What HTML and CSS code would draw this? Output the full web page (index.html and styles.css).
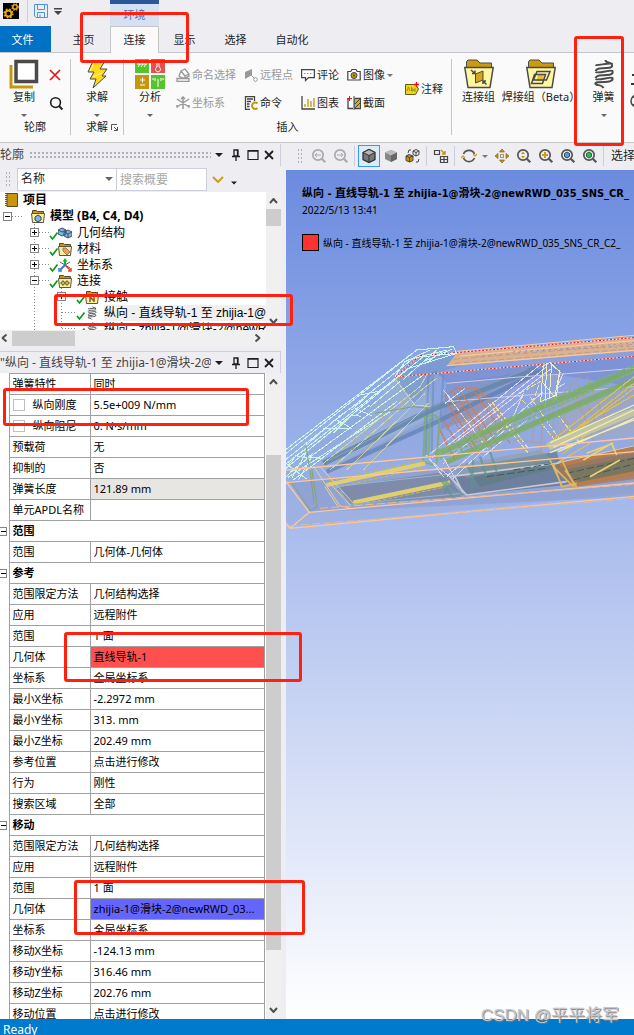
FILE: index.html
```html
<!DOCTYPE html>
<html lang="zh-CN">
<head>
<meta charset="utf-8">
<title>Mechanical</title>
<link rel="stylesheet" href="styles.css">
</head>
<body>
<svg class="defs" aria-hidden="true">
  <symbol id="caret" viewBox="0 0 8 4"><path d="M0 0h8L4 4z" fill="currentColor"/></symbol>
  <symbol id="check" viewBox="0 0 10 14"><path d="M1 9l2.500 3 5-6.500" fill="none" stroke="#0a9a1a" stroke-width="1.700"/></symbol>
  <symbol id="folder" viewBox="0 0 14 14"><path d="M1.500 5V1.500h4l1 1h6V5" fill="#c8960c" stroke="#5a4a18"/><path d="M.5 4.500h13l-1 9h-11z" fill="#fbeea0" stroke="#5a5540"/></symbol>
  <symbol id="bigfolder" viewBox="0 0 30 30"><path d="M2.500 9V2.500L4 1h9l3 3h11.500v5" fill="#cc9a10" stroke="#4a4a4a"/><path d="M.8 8.500h28.400L26 28.500H4z" fill="#fff6a0" stroke="#4a4a4a" stroke-width="1.500"/></symbol>
  <symbol id="spring" viewBox="0 0 21 30"><path d="M12 1c0 3 4 2 6 4 2 3-1 4-5 4-5 0-10 0-11 3M2 13c3 2 16-3 17-1 1 3-2 4-6 4-5 0-10 0-11 3M2 20c3 2 16-3 17-1 1 3-4 4-8 4-5 0-10 0-9 2 2 2 6 0 8 4M19 5C17 3 4 7 2 6" fill="none" stroke="#4a4a4a" stroke-width="2"/></symbol>
  <symbol id="mag" viewBox="0 0 16 16"><circle cx="7" cy="7" r="5.200" fill="none" stroke="currentColor" stroke-width="1.700"/><path d="M10.800 10.800l3.500 3.500" stroke="currentColor" stroke-width="2.200"/></symbol>
  <symbol id="up" viewBox="0 0 9 6"><path d="M1 5l3.500-4L8 5" fill="none" stroke="#505050" stroke-width="2"/></symbol>
  <symbol id="pin" viewBox="0 0 10 12"><path d="M3 1h4v6H3zM1 7.500h8M5 8v4M6.500 1v6" fill="none" stroke="#1e1e1e" stroke-width="1.300"/></symbol>
  <symbol id="max" viewBox="0 0 12 12"><path d="M1 1.500h10v9H1zM1 2.200h10" fill="none" stroke="#1e1e1e" stroke-width="1.200"/></symbol>
  <symbol id="close" viewBox="0 0 10 10"><path d="M1 1l8 8M9 1l-8 8" fill="none" stroke="#1e1e1e" stroke-width="1.800"/></symbol>
</svg>

<header class="titlebar">
  <div class="quick">
    <svg class="logo" viewBox="0 0 16 16"><path fill="#000" d="M0 0h16v16H0z"/><circle cx="5.500" cy="10.500" r="3" fill="none" stroke="#e8a41c" stroke-width="2"/><circle cx="5.500" cy="10.500" r="4.300" fill="none" stroke="#e8a41c" stroke-width="1.600" stroke-dasharray="1.700 1.700"/><circle cx="12" cy="4" r="2.200" fill="none" stroke="#e8a41c" stroke-width="1.600"/><circle cx="12" cy="4" r="3.200" fill="none" stroke="#e8a41c" stroke-width="1.300" stroke-dasharray="1.300 1.300"/></svg>
    <i class="vsep"></i>
    <button class="plain" aria-label="保存"><svg width="14" height="14" viewBox="0 0 14 14" fill="none" stroke="#4a94e0"><path d="M.5.5h13v13H2L.5 12zM3.500.5v5h7v-5M3.500 13.500v-5h7v5M6 13v-2.500"/></svg></button>
    <button class="plain" aria-label="自定义"><svg width="8" height="7" viewBox="0 0 8 7" fill="#444"><path d="M0 0h8v1.500H0zM0 3h8L4 7z"/></svg></button>
  </div>
  <div class="context">环境</div>
</header>

<nav class="tabs">
  <a class="tab file" href="#">文件</a><a class="tab home" href="#">主页</a><a class="tab on" href="#">连接</a><a class="tab" href="#">显示</a><a class="tab" href="#">选择</a><a class="tab auto" href="#">自动化</a>
</nav>

<section class="ribbon">
  <div class="group outline-group">
    <div class="body">
      <button class="big"><svg viewBox="0 0 30 30"><path d="M2 6v22h22" fill="none" stroke="#c8960c" stroke-width="3"/><path d="M7 2.500h20.500v20H7z" fill="#fff" stroke="#4a4a4a" stroke-width="3.500"/></svg>复制<svg class="caret"><use href="#caret"/></svg></button>
      <div class="stack">
        <button class="plain" aria-label="删除"><svg width="12" height="12" viewBox="0 0 12 12"><path d="M1 1l10 10M11 1L1 11" stroke="#e81010" stroke-width="1.600"/></svg></button>
        <button class="plain" aria-label="查找"><svg width="15" height="15"><use href="#mag"/></svg></button>
      </div>
    </div>
    <div class="label">轮廓</div>
  </div>
  <div class="group solve-group">
    <div class="body">
      <button class="big"><svg viewBox="0 0 30 30"><path d="M11 2h12l-5 8h7l-5 7h4L11 29l3-9H8l4-7H6z" fill="#ffd91a" stroke="#4a4a4a"/><path d="M12 4L8 12M11 18l9-4" stroke="#fff7a0"/></svg>求解<svg class="caret"><use href="#caret"/></svg></button>
    </div>
    <div class="label">求解 <svg width="7" height="7" viewBox="0 0 7 7" fill="none" stroke="#555"><path d="M.5 6V.5H6M3 3l3 3M6.500 3v3.500H3"/></svg></div>
  </div>
  <div class="group insert-group">
    <div class="body">
      <button class="big"><svg viewBox="0 0 30 30"><path fill="#55c52c" d="M0 0h14v14H0zM16 16h14v14H16z"/><path fill="#e2534f" d="M16 0h14v14H16z"/><path fill="#c8960c" d="M0 16h14v14H0z"/><path d="M2 5h10M3 8l2-3M6 8l2-3M9 8l2-3M5 21h5M7.500 18.500v5M5 26h5M23 20v8M20 19v3M26 19v3M18 19v2M28 19v2" stroke="#fff" fill="none"/><path d="M22 2h2v6a2.500 2.500 0 1 1-2 0z" fill="none" stroke="#fff"/></svg>分析<svg class="caret"><use href="#caret"/></svg></button>
      <div class="stack">
        <button class="small" disabled><svg viewBox="0 0 14 14" fill="none" stroke="#999"><path d="M1 10.500h12v3H1zM3 8l2-5 4-2 4 5v2l-4 2H6zM5 3l4 5v2M9 8l4-2" stroke-width="1.300"/></svg>命名选择</button>
        <button class="small" disabled><svg viewBox="0 0 14 14" fill="none" stroke="#999" stroke-width="1.500"><path d="M7 1v12M1 3l12 8M13 3L1 11M5 3l2-2 2 2M2 11H1V9M12 11h1V9"/></svg>坐标系</button>
      </div>
      <div class="stack">
        <button class="small" disabled><svg viewBox="0 0 14 14"><path d="M1 4l7-3v6L1 11z" fill="#999"/><path d="M7 7l4 4" stroke="#999"/><circle cx="11.500" cy="11.500" r="1.800" fill="#fff" stroke="#999"/></svg>远程点</button>
        <button class="small"><svg viewBox="0 0 14 14" fill="none" stroke="#444"><path d="M6 13.500H1.500V.5h9V5M3 3h6M3 5.500h4M3 8h2.500M3 10.500h2.500" stroke-width="1.300"/><path d="M13.500 7.500a3.200 3.200 0 1 0 0 4.500" stroke="#c8960c" stroke-width="2"/></svg>命令</button>
      </div>
      <div class="stack">
        <button class="small"><svg viewBox="0 0 14 14" fill="none" stroke="#444"><path d="M.6 1.600h12.800v8H7.500L4.500 12.500V9.600H.6z" stroke-width="1.200"/><path d="M3 5.500h8" stroke="#c8960c" stroke-dasharray="1.500 1.500"/></svg>评论</button>
        <button class="small"><svg viewBox="0 0 14 14" fill="none"><path d="M1 0v13h13" stroke="#444" stroke-width="1.300"/><path d="M4 11V8M7 11V3M10 11V5M13 11V2" stroke="#c8960c" stroke-width="1.300"/></svg>图表</button>
      </div>
      <div class="stack">
        <button class="small"><svg viewBox="0 0 14 14"><path d="M.8 3.500h3L5 1.500h4l1.200 2h3v8.500H.8z" fill="#fff" stroke="#444" stroke-width="1.200"/><circle cx="7" cy="7.500" r="3" fill="#c8960c" stroke="#444"/><circle cx="7" cy="7.500" r="1" fill="#444"/></svg>图像<svg class="mini"><use href="#caret"/></svg></button>
        <button class="small"><svg viewBox="0 0 14 14"><path d="M1 3v9.500h5M8 2.500h5.500v10H8z" fill="none" stroke="#444" stroke-width="1.300"/><path d="M8 3h5v9H8z" fill="#d6ad20"/><path d="M8 8l5-5M8 12l5-5M7 0v14" stroke="#444"/><path d="M0 2.500h5M2.500 0v5" stroke="#e11"/></svg>截面</button>
      </div>
      <div class="stack">
        <button class="small"><svg viewBox="0 0 14 14"><path d="M.5 2.500h10l3 4.500-3 5.500H.5z" fill="#ecd51c" stroke="#6a5a10"/><path d="M2 9l1.500-4L5 9M6.500 5v4h1.500V7H6.500M11 7H9v2h2" fill="none" stroke="#8a7810" stroke-width=".7"/><path d="M9 2.500h5M11.500 0v5" stroke="#e11" stroke-width="1.300"/></svg>注释</button>
      </div>
    </div>
    <div class="label">插入</div>
  </div>
  <div class="group link-group">
    <div class="body">
      <button class="big"><svg viewBox="0 0 30 30"><use href="#bigfolder"/><path d="M11.500 15l7.500-3v9l-7.500 3z" fill="#d6a418" stroke="#4a4a4a"/><path d="M7 11l4 3.500M19 22l3.500 3.500M8 14.500h3v-3M19 25v-3h3" fill="none" stroke="#4a4a4a" stroke-width="1.500"/></svg>连接组</button>
      <button class="big"><svg viewBox="0 0 30 30"><use href="#bigfolder"/><path d="M12 16h6l-1.500 6h-6z" fill="#e8be30"/><path d="M11 12.500h13l-3.500 8.500h-13zM8.500 15.500h11l-3 9h-11z" fill="none" stroke="#4a4a4a" stroke-width="1.500"/></svg>焊接组（Beta）</button>
      <button class="big"><svg viewBox="0 0 21 30"><use href="#spring"/></svg>弹簧<svg class="caret"><use href="#caret"/></svg></button>
      <div class="cut">
        <svg viewBox="0 0 14 14"><path d="M2 2h10M6 2v9M1 11h12" stroke="#333" stroke-width="2"/></svg>
        <svg viewBox="0 0 14 14"><path d="M3 3l9 8M3 11l9-8" stroke="#444"/><circle cx="7" cy="7" r="6" fill="none" stroke="#444" stroke-width="1.500"/></svg>
      </div>
    </div>
  </div>
</section>

<main class="work">
  <aside class="side">
    <section class="panel">
      <h2 class="head"><span>轮廓</span><i class="grip"></i><svg class="dd"><use href="#caret"/></svg><svg class="pin"><use href="#pin"/></svg><svg class="mx"><use href="#max"/></svg><svg class="cl"><use href="#close"/></svg></h2>
      <div class="search">
        <i class="vgrip"></i>
        <label class="pick"><select aria-label="筛选字段"><option>名称</option></select><svg class="dd"><use href="#caret"/></svg></label>
        <input type="text" placeholder="搜索概要" aria-label="搜索概要">
        <svg class="chev" viewBox="0 0 12 7"><path d="M1 1l5 5 5-5" fill="none" stroke="#cc9c1c" stroke-width="2"/></svg>
        <svg class="tiny"><use href="#caret"/></svg>
      </div>
      <div class="scroller">
        <div class="tree">
          <div class="row root"><svg class="ico" viewBox="0 0 14 14"><path d="M3 .5h10.500v13H3z" fill="#c8960c" stroke="#5a4a18"/><path d="M2 0v14" stroke="#555" stroke-width="2" stroke-dasharray="1 1"/></svg><b>项目</b></div>
          <div class="row l1"><i class="box minus"></i><i class="dots"></i><i></i><svg class="ico" viewBox="0 0 14 14"><use href="#folder"/><path d="M4 8l3-2 3 2v3l-3 2-3-2z" fill="#7db4e8" stroke="#345"/></svg><b>模型 (B4, C4, D4)</b></div>
          <div class="branch">
            <div class="row"><i class="box plus"></i><i class="dots"></i><svg class="ck"><use href="#check"/></svg><svg class="ico" viewBox="0 0 14 14"><path d="M0 4l4-2 4 2v4L4 10 0 8zM6 6l4-2 4 2v4l-4 2-4-2z" fill="#86b4e0" stroke="#34506c"/><path d="M0 4l4 2 4-2M6 6l4 2 4-2M10 8v4" fill="none" stroke="#34506c"/></svg><span>几何结构</span></div>
            <div class="row"><i class="box plus"></i><i class="dots"></i><svg class="ck"><use href="#check"/></svg><svg class="ico" viewBox="0 0 14 14"><use href="#folder"/><path d="M5 6l3 0 4 4-3 3-4-4z" fill="#e5a066" stroke="#86603c" stroke-width=".7"/></svg><span>材料</span></div>
            <div class="row"><i class="box plus"></i><i class="dots"></i><svg class="ck"><use href="#check"/></svg><svg class="ico" viewBox="0 0 14 14"><path d="M2 4l10 6M12 4L7 7" stroke="#555"/><path d="M7 8V3" stroke="#18b030" stroke-width="2"/><path d="M4.500 3.500L7 0l2.500 3.500z" fill="#18b030"/><path d="M7 7l-5 5" stroke="#3878e0" stroke-width="2"/><path d="M7 7l5 5M10 13h3v-3" fill="none" stroke="#e84020" stroke-width="1.500"/><path d="M1 10v3h3" fill="none" stroke="#3878e0" stroke-width="1.500"/></svg><span>坐标系</span></div>
            <div class="row"><i class="box minus"></i><i class="dots"></i><svg class="ck"><use href="#check"/></svg><svg class="ico" viewBox="0 0 14 14"><use href="#folder"/><path d="M3 9l2-2 4 4 2-2-2-2-4 4z" fill="none" stroke="#86702c" stroke-width="1.400"/></svg><span>连接</span></div>
            <div class="branch">
              <div class="row"><i class="box plus"></i><i class="dots"></i><svg class="ck"><use href="#check"/></svg><svg class="ico" viewBox="0 0 14 14"><use href="#folder"/><path d="M5 6v6M9 6v6M5 7l4 4" stroke="#806010" fill="none" stroke-width="1.500"/></svg><span>接触</span></div>
              <div class="row"><i class="dots long"></i><svg class="ck"><use href="#check"/></svg><svg class="ico" viewBox="0 0 21 30"><use href="#spring"/></svg><span class="sel">纵向 - 直线导轨-1 至 zhijia-1@滑块</span></div>
              <div class="row"><i class="dots long"></i><svg class="ck"><use href="#check"/></svg><svg class="ico" viewBox="0 0 21 30"><use href="#spring"/></svg><span class="sel plainrow">纵向 - zhijia-1@滑块-2@newRWD</span></div>
            </div>
          </div>
        </div>
        <div class="vbar"><svg class="arr"><use href="#up"/></svg><i class="thumb"></i><svg class="arr down"><use href="#up"/></svg></div>
      </div>
      <div class="hbar"><svg class="arr left"><use href="#up"/></svg><i class="thumb"></i><svg class="arr right"><use href="#up"/></svg></div>
    </section>

    <section class="panel details">
      <h2 class="head"><span class="clip">"纵向 - 直线导轨-1 至 zhijia-1@滑块-2@</span><svg class="dd"><use href="#caret"/></svg><svg class="pin"><use href="#pin"/></svg><svg class="mx"><use href="#max"/></svg><svg class="cl"><use href="#close"/></svg></h2>
      <div class="scroller props">
        <div class="sheet">
        <table>
          <colgroup><col class="gut"><col class="name"><col></colgroup>
          <tbody>
          <tr><td></td><th>弹簧特性</th><td>同时</td></tr>
          <tr><td></td><th><label><input type="checkbox">纵向刚度</label></th><td>5.5e+009 N/mm</td></tr>
          <tr><td></td><th><label><input type="checkbox">纵向阻尼</label></th><td>0. N·s/mm</td></tr>
          <tr><td></td><th>预载荷</th><td>无</td></tr>
          <tr><td></td><th>抑制的</th><td>否</td></tr>
          <tr><td></td><th>弹簧长度</th><td class="ro">121.89 mm</td></tr>
          <tr><td></td><th>单元APDL名称</th><td></td></tr>
          <tr class="cat"><td><i class="box minus"></i></td><th colspan="2">范围</th></tr>
          <tr><td></td><th>范围</th><td>几何体-几何体</td></tr>
          <tr class="cat"><td><i class="box minus"></i></td><th colspan="2">参考</th></tr>
          <tr><td></td><th>范围限定方法</th><td>几何结构选择</td></tr>
          <tr><td></td><th>应用</th><td>远程附件</td></tr>
          <tr><td></td><th>范围</th><td>1 面</td></tr>
          <tr><td></td><th>几何体</th><td class="red">直线导轨-1</td></tr>
          <tr><td></td><th>坐标系</th><td>全局坐标系</td></tr>
          <tr><td></td><th>最小X坐标</th><td>-2.2972 mm</td></tr>
          <tr><td></td><th>最小Y坐标</th><td>313. mm</td></tr>
          <tr><td></td><th>最小Z坐标</th><td>202.49 mm</td></tr>
          <tr><td></td><th>参考位置</th><td>点击进行修改</td></tr>
          <tr><td></td><th>行为</th><td>刚性</td></tr>
          <tr><td></td><th>搜索区域</th><td>全部</td></tr>
          <tr class="cat"><td><i class="box minus"></i></td><th colspan="2">移动</th></tr>
          <tr><td></td><th>范围限定方法</th><td>几何结构选择</td></tr>
          <tr><td></td><th>应用</th><td>远程附件</td></tr>
          <tr><td></td><th>范围</th><td>1 面</td></tr>
          <tr><td></td><th>几何体</th><td class="blue">zhijia-1@滑块-2@newRWD_03...</td></tr>
          <tr><td></td><th>坐标系</th><td>全局坐标系</td></tr>
          <tr><td></td><th>移动X坐标</th><td>-124.13 mm</td></tr>
          <tr><td></td><th>移动Y坐标</th><td>316.46 mm</td></tr>
          <tr><td></td><th>移动Z坐标</th><td>202.76 mm</td></tr>
          <tr><td></td><th>移动位置</th><td>点击进行修改</td></tr>
          </tbody>
        </table>
        </div>
        <div class="vbar"><svg class="arr"><use href="#up"/></svg><i class="thumb"></i><svg class="arr down"><use href="#up"/></svg></div>
      </div>
    </section>
  </aside>

  <section class="stage">
    <div class="tools">
      <i class="vgrip"></i>
      <button class="tool dim" aria-label="上一视图"><svg viewBox="0 0 16 16"><use href="#mag"/><path d="M10 7H4M6 5L4 7l2 2" fill="none" stroke="currentColor"/></svg></button>
      <button class="tool dim" aria-label="下一视图"><svg viewBox="0 0 16 16"><use href="#mag"/><path d="M4 7h6M8 5l2 2-2 2" fill="none" stroke="currentColor"/></svg></button>
      <i class="tsep"></i>
      <button class="tool picked" aria-label="带边着色"><svg viewBox="0 0 16 16"><path d="M2 4.500L8 1.500l6 3v7l-6 3-6-3z" fill="#777" stroke="#333" stroke-width="1.300"/><path d="M2 4.500l6 3 6-3-6-3z" fill="#b5b5b5" stroke="#333"/><path d="M8 7.500v7" stroke="#333"/></svg></button>
      <button class="tool" aria-label="着色"><svg viewBox="0 0 16 16"><path d="M2 4.500L8 2l6 2.500v6.500l-6 3-6-3z" fill="#888"/><path d="M2 4.500l6 3 6-3L8 2z" fill="#bbb"/><path d="M8 7.500l6-3V11l-6 3z" fill="#666"/></svg></button>
      <button class="tool" aria-label="线框"><svg viewBox="0 0 16 16" fill="none" stroke="#444"><path d="M8 3l3-1.500L14 3v3.500L11 8 8 6.500zM8 3l3 1.500L14 3M11 4.500V8"/><path d="M1 8l3-1.500L8 8v4.500L4.500 14 1 12.500z" fill="#c8960c"/><path d="M1 8l3.500 1.500L8 8M4.500 9.500V14M3 5l1-3h2M11 14h2l1-3"/></svg></button>
      <i class="tsep"></i>
      <button class="tool" aria-label="随机着色"><svg viewBox="0 0 16 16" fill="none" stroke="#444"><path d="M1.500 2.500h5v4h-5zM7.500 8.500h7v6h-7zM11 8.500v6M7.500 11.500h7" stroke-width="1.200"/><path d="M8 2l4 4M12 3v3H9" stroke="#c8960c" stroke-width="1.500"/></svg></button>
      <i class="tsep"></i>
      <button class="tool" aria-label="旋转"><svg viewBox="0 0 16 16" fill="none" stroke="#555" stroke-width="1.700"><path d="M2.500 6a6 6 0 0 1 11 0M13.500 10a6 6 0 0 1-11 0"/><path d="M0 10l2-2 2 2M12 6l2 2 2-2" stroke="#d0a020" stroke-width="1.300"/></svg></button>
      <svg class="tcaret"><use href="#caret"/></svg>
      <button class="tool" aria-label="平移"><svg viewBox="0 0 16 16" fill="#c8960c" stroke="#6a5010" stroke-width=".6"><path d="M8 1l2.500 3h-5zM8 15l2.500-3h-5zM1 8l3-2.500v5zM15 8l-3-2.500v5z"/><path d="M6.500 6.500h3v3h-3z" fill="none"/></svg></button>
      <button class="tool" aria-label="缩放"><svg viewBox="0 0 16 16"><use href="#mag"/><path d="M5 6h4L7 3.500zM5 8h4l-2 2.500z" fill="#c8960c"/></svg></button>
      <button class="tool" aria-label="放大"><svg viewBox="0 0 16 16"><use href="#mag"/><path d="M4 7h6M7 4v6" stroke="#d09c08" stroke-width="2"/></svg></button>
      <button class="tool" aria-label="适合窗口"><svg viewBox="0 0 16 16"><use href="#mag"/><path d="M4.500 5.500L7 4l2.500 1.500v3L7 10 4.500 8.500z" fill="#5c98dc" stroke="#345"/></svg></button>
      <button class="tool" aria-label="缩放到选择"><svg viewBox="0 0 16 16"><use href="#mag"/><path d="M4.500 5.500L7 4l2.500 1.500v3L7 10 4.500 8.500z" fill="#30b84a" stroke="#264"/></svg></button>
      <i class="tsep"></i>
      <span class="pickmode">选择</span>
    </div>
    <div class="view">
      <h1>纵向 - 直线导轨-1 至 zhijia-1@滑块-2@newRWD_035_SNS_CR_</h1>
      <p>2022/5/13 13:41</p>
      <p class="legend"><i></i><span>纵向 - 直线导轨-1 至 zhijia-1@滑块-2@newRWD_035_SNS_CR_C2_</span></p>
      <svg class="scene" viewBox="18 30 1044 630" fill="none" stroke-width="3">
        <!-- translucent bodies -->
        <path d="M18 445L390 160 500 110 1062 50V520L30 622 18 600z" fill="#7d92c4" opacity=".2"/>
        <path d="M30 485L1062 395V530L90 577z" fill="#8492c0" opacity=".45"/>
        <path d="M130 440L350 165 430 170 470 285z" fill="#a9bfc8" opacity=".35"/>
        <path d="M345 170L425 108 505 100 560 130 470 160 405 255z" fill="#7396c8" opacity=".55"/>
        <path d="M480 160L1062 108V200L840 165 500 190z" fill="#7285cc" opacity=".5"/>
        <path d="M500 190L780 150 560 300 480 330z" fill="#7585bc" opacity=".45"/>
        <path d="M170 502L500 455 545 530 215 553z" fill="#767f94" opacity=".65"/>
        <path d="M510 470L1062 400V460L860 495 560 525z" fill="#64748c" opacity=".75"/>
        <path d="M560 440L830 395 845 440 600 500z" fill="#5f7c84" opacity=".7"/>
        <path d="M820 430L1062 375V478L880 500 845 470z" fill="#a97446" opacity=".65"/>
        <path d="M850 450L1062 410V455L900 485z" fill="#777761" opacity=".9"/>
        <path d="M500 240l110-40 90 120-120 60z" fill="#c08e78" opacity=".3"/>
        <path d="M840 230L1062 190V340L830 370z" fill="#b9a98e" opacity=".28"/>
        <path d="M500 440L780 390 820 420 560 475z" fill="#8c9b9a" opacity=".5"/>
        <!-- slate braces -->
        <path d="M130 430L470 262 770 145" stroke="#6687ac" stroke-width="18" opacity=".9"/>
        <path d="M140 455L440 320 790 150" stroke="#5f7db2" stroke-width="13" opacity=".7"/>
        <path d="M150 420L470 255 740 148M160 440L690 188" stroke="#89a3b9"/>
        <path d="M445 170l-8 235M490 165l-8 130M445 170l20-15 25 15M460 175l-5 225" stroke="#6288a8" stroke-width="6" opacity=".5"/>
        <!-- upper rail -->
        <path d="M530 100L1062 50V94L500 138z" fill="#dfb28b" opacity=".95"/>
        <path d="M520 118L1062 73M525 130L1062 86" stroke="#b8a08e" stroke-dasharray="18 8"/>
        <path d="M530 94L1062 46M500 137L1062 91M540 108L1062 62" stroke="#ffca98"/>
        <path d="M590 109L1062 68M700 94L1062 79" stroke="#8593c8" stroke-dasharray="5 13"/>
        <path d="M420 107L1062 53M345 171L1062 109M345 171L420 107" stroke="#ffe4e0"/>
        <path d="M420 107L1062 53M345 171L1062 109M345 171L420 107" stroke="#e01414" stroke-dasharray="6 5"/>
        <path d="M500 190L730 170 850 162 1062 145M500 245L780 222 1062 200" stroke="#cfc9ea"/>
        <!-- pale-cyan frame at left -->
        <g stroke="#cbf5e8" shape-rendering="crispEdges">
          <path d="M18 400L410 90 520 80 530 100 430 110 18 445M18 418L400 115 500 90M18 432L385 145 530 100M30 455L345 225 430 165M24 472L330 275M40 480L350 245M18 388L390 105"/>
          <path d="M345 170L375 125 450 90M370 178L430 125 515 88M420 135l50-45M440 128l48-34M215 270l55-50M175 290l60-40M170 300l45 25M230 285l40-30M225 265l50 22M240 225l60-12M80 395l-45 80M95 410l-40 70M18 445l30-38 30-20M18 470l80-70M20 432l60 45"/>
          <path d="M50 410l80 5M160 340l55-55 28 4M270 260l90-75M130 325l85 0M80 375l90-80"/>
        </g>
        <path d="M130 430L420 200 440 165M150 450L430 205 470 175M200 450L435 220M250 450L445 250M345 175L405 255 450 260" stroke="#d9d999" opacity=".85" shape-rendering="crispEdges"/>
        <path d="M285 280L400 260 445 265M95 445L112 560 92 572 35 490M90 450l12 100M78 380l10 60" stroke="#83a374"/>
        <!-- orange columns -->
        <g stroke="#c87d58" opacity=".8" stroke-width="4" shape-rendering="crispEdges">
          <path d="M490 230L530 205 590 205 620 235M495 240L600 400M520 215L640 390M545 220L655 375M580 210L690 370M490 300L550 400M510 285L580 390M560 240L500 330M480 330l45 90"/>
        </g>
        <path d="M900 170l-60 60 20 90M920 170l60 140M890 190l80 160M770 240l-15 130M815 250l10 120M790 260l-8 140M700 360l130 15M880 210l60 150" stroke="#b09c90" stroke-width="5" opacity=".65"/>
        <!-- pale lavender diagonals -->
        <g stroke="#ddd6ee" shape-rendering="crispEdges"><path d="M440 410L780 135M455 415L800 140M470 410L815 145M490 430L730 230M440 405l50 65M500 470L790 215M520 475L700 305M480 395l45 80M455 425l60 50M490 210l30 35M495 250l60-45M850 160l-20 45 25-15M730 220l-30 70M610 410l130-110"/></g>
        <!-- ivory posts -->
        <g stroke="#eeefb7" shape-rendering="crispEdges"><path d="M790 135l-8 110M800 130l-5 130M815 130l-8 115M840 150l-20 100M785 140l25-12 32 30M840 150l-12 90M790 190l45 55M780 245l50-20"/></g>
        <g stroke="#eee08d" stroke-dasharray="15 5" shape-rendering="crispEdges"><path d="M625 250l120 150M635 245l110 140M505 230l120 160M715 225l130 160M750 230l100 145M830 280l70 90M720 220l60-35-25 70"/></g>
        <!-- green braces -->
        <path d="M430 425L435 290 465 285 478 300 470 430M450 295l-5 120M430 425l30 10" stroke="#76ad66" stroke-width="6" opacity=".75"/>
        <path d="M465 405L780 262 1062 150M500 425L1062 180" stroke="#7eaa65" stroke-width="17" opacity=".85"/>
        <path d="M470 395L780 252 1062 136M480 415L1062 155M560 405L1062 190" stroke="#79b86c" stroke-width="5" stroke-dasharray="12 4"/>
        <!-- yellow and ivory beams at right -->
        <g stroke="#d9bf51" stroke-width="4" shape-rendering="crispEdges"><path d="M800 375L1062 170M820 380L1062 190M840 370L1062 205M830 360L1062 225M850 400L1000 280M830 430L930 370"/></g>
        <path d="M805 380L1062 275" stroke="#c7c7a0" stroke-width="24" opacity=".9"/>
        <path d="M810 368L1062 255M820 382L1062 270M835 395L1062 295M810 398L1062 300" stroke="#eeeeb5" stroke-width="4"/>
        <!-- lower beams -->
        <path d="M140 495L435 430M220 548L510 487" stroke="#dfcf70" stroke-width="13"/>
        <path d="M150 483L430 420M225 557L500 500M165 503L435 443" stroke="#c8b95b" stroke-dasharray="12 5"/>
        <path d="M100 438l80 120 28 5M120 440l100 110M135 500l40 62M150 490l60 65" stroke="#e8d492"/>
        <path d="M165 500L500 463M210 553L545 520M180 503l22 58" stroke="#95b4d0"/>
        <path d="M510 470L830 430 1062 378M560 525L860 485M510 470l50 55M525 470l25 50" stroke="#c7cbd4" stroke-width="5"/>
        <path d="M480 475l40 60M490 480l60 45M500 480l-5 40M560 430l30 70M580 420l-5 90M600 410l20 60M630 395l20 60" stroke="#5e9490" stroke-width="7" opacity=".65"/>
        <path d="M700 450L820 430M620 470L800 445M860 460L1062 415M880 480L1062 432" stroke="#48545b" stroke-dasharray="22 9"/>
        <path d="M840 435L1062 385M885 495L1062 460" stroke="#b77d4a" stroke-width="12"/>
        <path d="M820 430l25 70 45-10M820 440l60 60M855 450l35 50M845 420l40 80M810 420l35 75" stroke="#ddb860" stroke-width="5"/>
        <path d="M910 420l85-50 15 35M930 470l90-50M920 400l80-30" stroke="#ead46e" stroke-width="5"/>
        <!-- peach outline beams -->
        <g stroke="#ffc795" stroke-width="4"><path d="M18 450L1062 354M18 488L1062 395M88 577L1062 489M30 625L1062 529M88 577L30 625 18 610M18 485L88 577"/><path d="M28 618L1062 535M120 565L1062 493" stroke="#e6bb91" stroke-dasharray="25 9" stroke-width="3"/></g>
      </svg>
    </div>
  </section>
</main>

<footer class="status">Ready</footer>
<div class="watermark">CSDN @平平将军</div>
<i class="mark m1"></i><i class="mark m2"></i><i class="mark m3"></i><i class="mark m4"></i><i class="mark m5"></i><i class="mark m6"></i>
</body>
</html>
```
FILE: styles.css
```css
* { box-sizing: border-box; }
body {
  margin: 0;
  height: 100vh;
  display: flex;
  flex-direction: column;
  position: relative;
  overflow: hidden;
  background: #eeeef2;
  color: #1e1e1e;
  font: 11px/16px "Noto Sans", "Noto Sans CJK SC", sans-serif;
}
i { display: block; font-style: normal; }
svg { display: block; flex: none; }
h1, h2, p { margin: 0; font: inherit; }
button { font: inherit; color: inherit; border: 0; padding: 0; background: none; white-space: nowrap; }
.defs { display: none; }
.plain { display: block; }

/* title bar */
.titlebar { display: grid; grid-template-columns: 110px 49px 1fr; height: 26px; flex: none; }
.quick { display: flex; align-items: center; gap: 6px; padding: 0 0 4px 3px; }
.logo { width: 16px; height: 16px; }
.vsep { width: 1px; height: 22px; background: #ccced8; margin-left: 2px; }
.context { background: #d5e0f3; border-top: 4px solid #2b579a; color: #4a70b4; text-align: center; line-height: 22px; }

.tabs { display: flex; height: 27px; flex: none; border-bottom: 1px solid #c6c6c6; }
.tab { width: 51px; color: inherit; text-decoration: none; text-align: center; line-height: 27px; }
.tab.file { background: #0072c6; color: #fff; height: 26px; padding-right: 6px; }
.tab.home { width: 59px; padding-left: 6px; }
.tab.on { width: 49px; height: 27px; background: #fafafa; border: solid #c6c6c6; border-width: 1px 1px 0; line-height: 25px; }
.tab.auto { width: 62px; }

/* ribbon */
.ribbon { display: flex; flex: none; height: 90px; padding-top: 6px; background: #fafafa; border-bottom: 1px solid #c6c6c6; overflow: hidden; }
.group { display: flex; flex-direction: column; flex: none; height: 76px; border-right: 1px solid #c6c6c6; }
.body { display: flex; height: 62px; }
.label { display: flex; justify-content: center; align-items: center; gap: 3px; }
.big { display: flex; flex-direction: column; align-items: center; }
.big > svg { height: 30px; width: 30px; }
.big > svg.caret { width: 6px; height: 3px; margin-top: 9px; color: #666; }
.stack { display: grid; grid-auto-rows: 28px; align-content: center; align-items: center; justify-items: start; }
.small { display: flex; align-items: center; gap: 2px; }
.small > svg { width: 14px; height: 14px; }
.small > svg.mini { width: 6px; height: 3px; color: #777; }
.small:disabled { color: #999; }
.outline-group { width: 71px; }
.outline-group .body { padding-left: 9px; gap: 10px; }
.solve-group { width: 53px; }
.solve-group .big { width: 52px; }
.solve-group .label { padding-left: 10px; }
.insert-group { width: 328px; }
.insert-group .body { display: grid; grid-template-columns: 52px 68px 57px 46px 58px 46px; }
.link-group { border: 0; }
.link-group .body { display: grid; grid-template-columns: 53px 72px 53px 20px; }
.link-group .big { justify-self: center; }
.cut { display: grid; gap: 7px; align-content: center; }
.cut svg { width: 14px; height: 14px; }

/* docked panels */
.work { display: flex; flex: 1; min-height: 0; }
.side { width: 281px; flex: none; display: flex; flex-direction: column; gap: 5px; min-height: 0; }
.panel { flex: none; }
.head { display: flex; align-items: center; height: 22px; margin-top: 1px; padding-right: 6px; font-size: 12px; color: #444; border: solid #ccceDB; border-width: 0 1px 0 0; }
.head svg { color: #1e1e1e; }
.head .dd { width: 8px; height: 4px; margin: 0 8px 0 4px; }
.head .pin { width: 10px; height: 12px; margin-right: 6px; }
.head .mx { width: 12px; height: 12px; margin-right: 5px; }
.head .cl { width: 10px; height: 10px; }
.clip { flex: 1; overflow: hidden; white-space: nowrap; }
.grip { flex: 1; height: 8px; margin-left: 5px; background: radial-gradient(circle, #b0b0b8 0 1px, transparent 1px) 0 0 / 4px 4px; }
.vgrip { width: 6px; height: 16px; background: radial-gradient(circle, #b0b0b8 0 1px, transparent 1px) 0 0 / 3px 4px; }
.search { display: flex; align-items: center; height: 26px; padding-left: 5px; }
.search .vgrip { margin-right: 6px; }
.pick { display: grid; align-items: center; width: 100px; }
.pick > * { grid-area: 1 / 1; }
.pick svg { width: 8px; height: 4px; justify-self: end; margin-right: 4px; color: #666; }
.pick select, .search input { width: 100%; height: 23px; appearance: none; border: 1px solid #ccceDB; border-radius: 0; background: #fff; font: inherit; font-size: 12px; padding: 0 3px; color: #1e1e1e; }
.search input { width: 90px; border-left: 0; }
.search input::placeholder { color: #a8a8a8; }
.chev { width: 12px; height: 7px; margin: 0 7px 0 5px; }
.tiny { width: 6px; height: 4px; margin-top: 8px; }

.scroller { display: flex; height: 138px; }
.tree { flex: 1; min-width: 0; overflow: hidden; background: #fff; font-size: 12px; color: #000; }
.row { display: grid; grid-template-columns: 9px 10px 9px 14px 1fr; align-items: center; height: 16px; white-space: nowrap; }
.row > :last-child { margin-left: 5px; }
.row.root { grid-template-columns: 14px 1fr; padding-left: 4px; }
.row.l1 { margin-left: 3px; }
.branch { margin-left: 3px; padding-left: 27px; background: repeating-linear-gradient(#888 0 1px, transparent 1px 3px) 31px 0 / 1px 100% no-repeat; }
.branch .branch { margin-left: 0; }
.row .ico { width: 14px; height: 14px; }
.row .ck { width: 10px; height: 14px; margin-top: 3px; }
.dots { height: 1px; background: repeating-linear-gradient(90deg, #888 0 1px, transparent 1px 3px); }
.dots.long { grid-column: 1 / 3; margin-left: 5px; }
.sel { background: #f0f0f0; overflow: hidden; font-family: "Liberation Sans", "Noto Sans CJK SC", sans-serif; }
.sel.plainrow { background: none; }
.box { width: 9px; height: 9px; border: 1px solid #848484; background: linear-gradient(#000, #000) center / 5px 1px no-repeat, #fff; }
.box.plus { background: linear-gradient(#000, #000) center / 5px 1px no-repeat, linear-gradient(#000, #000) center / 1px 5px no-repeat, #fff; }

.vbar { width: 15px; flex: none; display: flex; flex-direction: column; align-items: center; background: #f0f0f0; padding: 6px 0; }
.arr { width: 9px; height: 6px; }
.arr.down { transform: rotate(180deg); margin-top: auto; }
.vbar .thumb { width: 15px; height: 17px; margin-top: 5px; background: #cdcdcd; }
.hbar { display: flex; align-items: center; height: 16px; background: #f0f0f0; padding-right: 19px; }
.hbar .thumb { width: 63px; height: 15px; margin-left: 3px; background: #cdcdcd; }
.arr.left { transform: rotate(-90deg); }
.arr.right { transform: rotate(90deg); margin-left: auto; }

.details { flex: 1; min-height: 0; display: flex; flex-direction: column; }
.details .head { flex: none; height: 22px; margin: 0; border-top-width: 1px; }
.props { flex: 1; height: auto; min-height: 0; }
.props .vbar .thumb { height: 78%; margin-top: 70px; }
.sheet { flex: 1; overflow: hidden; background: #fff; padding-right: 1px; }
table { width: 100%; table-layout: fixed; border-collapse: collapse; color: #000; }
.gut { width: 9px; }
.name { width: 81px; }
th, td { height: 21px; padding: 0 3px; border: 1px solid #a0a0a0; text-align: left; font-weight: 400; white-space: nowrap; line-height: 16px; }
td:first-child { border: 0; padding: 0; overflow: hidden; }
td:first-child .box { width: 7px; border-left: 0; }
.cat th { font-weight: 700; }
th label { display: flex; align-items: center; }
th input { appearance: none; width: 12px; height: 12px; margin: 0 8px 0 0; border: 1px solid #c0c0c0; background: #fff; }
.ro { background: #e8e6e2; }
.red { background: #ff5050; }
.blue { background: #6464ff; }

/* graphics area */
.stage { flex: 1; min-width: 0; margin-left: 5px; display: flex; flex-direction: column; }
.tools { display: flex; align-items: center; height: 27px; flex: none; padding: 0 0 1px 11px; overflow: hidden; }
.tools .vgrip { margin-right: 5px; flex: none; }
.tool { width: 22px; height: 22px; flex: none; display: grid; place-items: center; color: #555; }
.tool svg { width: 16px; height: 16px; }
.dim { color: #aaa; }
.picked { border: 1px solid #3399ff; background: #dcebf8; }
.tsep { width: 1px; height: 20px; margin: 0 3px 0 2px; background: #ccceDB; flex: none; }
.tcaret { width: 6px; height: 3px; margin: 0 3px 0 2px; color: #777; }
.pickmode { font-size: 12px; margin-left: 4px; white-space: nowrap; }
.view { flex: 1; min-height: 0; padding-top: 16px; overflow: hidden; background: linear-gradient(#6b8bdf, #fff); color: #000; }
.view h1, .view p { padding-left: 16px; white-space: nowrap; }
.view h1 { font-weight: 700; font-family: "DejaVu Sans Condensed", "Noto Sans", "Noto Sans CJK SC", sans-serif; }
.view p { font-size: 10px; }
.view .legend { display: flex; align-items: center; gap: 4px; margin-top: 16px; }
.legend i { width: 17px; height: 17px; flex: none; background: #ff3232; border: 1px solid #000; }
.scene { width: 100%; height: auto; margin-top: 79px; }

.status { height: 16px; flex: none; padding-left: 3px; background: #007acc; color: #fff; font-size: 12px; line-height: 22px; overflow: hidden; }

/* overlays */
.watermark { position: absolute; right: 15px; bottom: 7px; font: 17px/24px "Liberation Sans", "Noto Sans CJK SC", sans-serif; color: #c4c6cc; text-shadow: 1px 1px 1px #777; }
.mark { position: absolute; border: 3px solid #ff2010; border-radius: 3px; }
.m1 { left: 80px; top: 12px; width: 109px; height: 51px; }
.m2 { left: 574px; top: 36px; width: 50px; height: 110px; }
.m3 { left: 54px; top: 294px; width: 239px; height: 32px; }
.m4 { left: 3px; top: 388px; width: 246px; height: 38px; }
.m5 { left: 64px; top: 632px; width: 238px; height: 50px; }
.m6 { left: 74px; top: 880px; width: 231px; height: 55px; }
```
